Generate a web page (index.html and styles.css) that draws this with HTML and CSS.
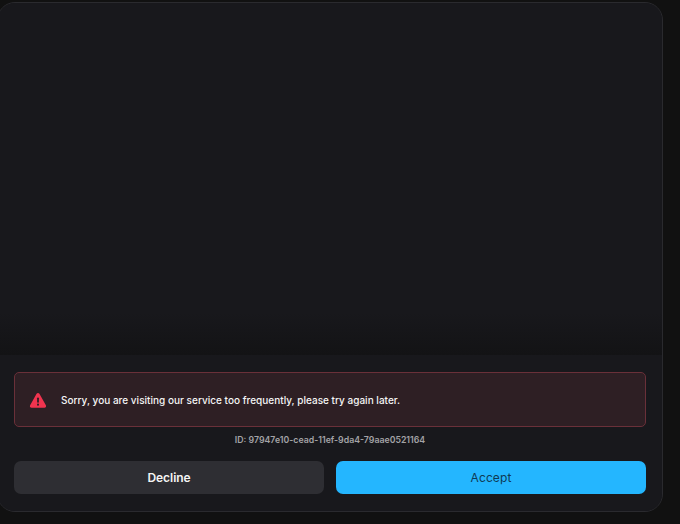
FILE: index.html
```html
<!DOCTYPE html>
<html lang="en">
<head>
<meta charset="utf-8">
<title>Verification</title>
<link rel="stylesheet" href="styles.css">
</head>
<body>
<main class="card">
  <div class="stage"></div>
  <section class="panel">
    <div class="alert">
      <svg class="alert-icon" viewBox="0 0 24 24" width="18" height="18" aria-hidden="true">
        <path class="tri" d="M12 2.600c-.8 0-1.500.4-1.900 1.100L1.500 18.900c-.9 1.500.2 3.300 1.900 3.300h17.200c1.700 0 2.800-1.800 1.900-3.300L13.900 3.700c-.4-.7-1.100-1.100-1.900-1.100z"/>
        <rect class="mark" x="10.800" y="8.500" width="2.400" height="7" rx="1"/>
        <circle class="mark" cx="12" cy="18.200" r="1.400"/>
      </svg>
      <p class="alert-text">Sorry, you are visiting our service too frequently, please try again later.</p>
    </div>
    <p class="req-id">ID: 97947e10-cead-11ef-9da4-79aae0521164</p>
    <div class="actions">
      <button class="btn btn-decline" type="button">Decline</button>
      <button class="btn btn-accept" type="button">Accept</button>
    </div>
  </section>
</main>
</body>
</html>
```
FILE: styles.css
```css
* { box-sizing: border-box; }
html, body { margin: 0; height: 100%; }
body {
  background: #111111;
  font-family: Inter, "Liberation Sans", sans-serif;
  overflow: hidden;
  padding: 2px 17px 12px 0;
}
.card {
  height: 510px;
  margin-left: -3px;
  display: flex;
  flex-direction: column;
  background: #18181c;
  border: 1px solid #2a2a2e;
  border-radius: 18px;
  overflow: hidden;
}
.stage {
  flex: 1;
  background: linear-gradient(to bottom, #18181c 0, #18181c 88%, #131315 100%);
}
.panel {
  height: 156px;
  padding: 17px 16px 0;
  background: #18181c;
}
.alert {
  height: 55px;
  display: flex;
  align-items: center;
  gap: 14px;
  padding: 0 14px;
  background: #2e1f24;
  border: 1px solid #6a3039;
  border-radius: 5px;
}
.alert-icon { flex: none; }
.tri { fill: #f0344f; }
.mark { fill: #2e1f24; }
.alert-text {
  margin: 0;
  color: #f5f5f5;
  font-size: 10px;
  font-weight: 500;
  letter-spacing: 0.015px;
}
.req-id {
  margin: 7px 0 0;
  height: 12px;
  line-height: 12px;
  text-align: center;
  color: #a3a3a6;
  font-size: 8.750px;
  font-weight: 600;
}
.actions {
  margin-top: 15px;
  display: flex;
  gap: 12px;
}
.btn {
  flex: 1;
  height: 33px;
  border: 0;
  border-radius: 7px;
  font-family: inherit;
  font-size: 12px;
}
.btn-decline { background: #2e2e33; color: #f5f5f5; font-weight: 600; letter-spacing: -0.05px; }
.btn-accept { background: #24b6ff; color: #0f3a55; font-weight: 400; letter-spacing: 0.1px; }
```
